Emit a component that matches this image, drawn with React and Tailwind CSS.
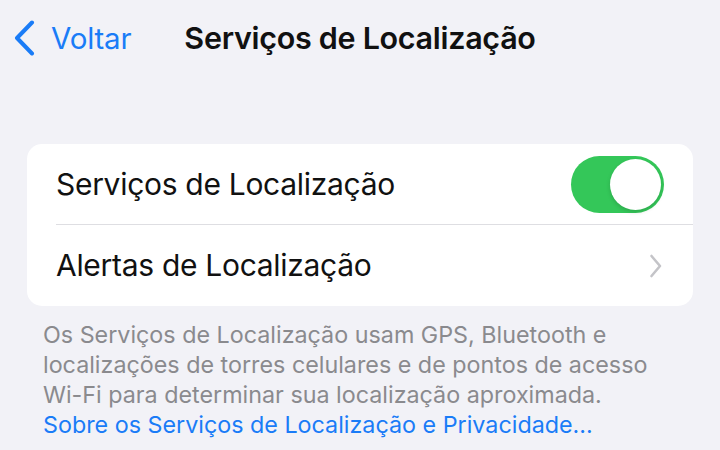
import React from "react";

const font = { fontFamily: "Inter, 'Noto Sans', sans-serif" };

function BackChevron() {
  return (
    <svg width="22" height="36" viewBox="0 0 22 36" fill="none">
      <path d="M19 2.5 L4 18 L19 33.5" stroke="#1a7cf7" strokeWidth="4" strokeLinecap="round" strokeLinejoin="round" />
    </svg>
  );
}

function RowChevron() {
  return (
    <svg width="14" height="24" viewBox="0 0 14 24" fill="none">
      <path d="M2.5 2 L11 12 L2.5 22" stroke="#c4c4c8" strokeWidth="2.6" strokeLinecap="round" strokeLinejoin="round" />
    </svg>
  );
}

function Toggle() {
  return (
    <div className="w-[93px] h-[57px] rounded-full bg-[#34c759] p-[3px] flex justify-end">
      <div className="w-[51px] h-[51px] rounded-full bg-white shadow-[0_2px_4px_rgba(0,0,0,0.15)]" />
    </div>
  );
}

export default function App() {
  return (
    <div className="w-[720px] h-[450px] bg-[#f2f2f7] overflow-hidden" style={font}>
      <header className="h-[76px] grid grid-cols-[1fr_auto_1fr] items-center">
        <div className="flex items-center pl-[13px] gap-[16px] text-[#1a7cf7] text-[29.5px] tracking-[-0.2px]">
          <BackChevron />
          <span>Voltar</span>
        </div>
        <h1 className="text-[30.5px] font-semibold text-[#111] tracking-[-0.3px]">Serviços de Localização</h1>
        <div />
      </header>

      <div className="mt-[68px] mx-[27px] bg-white rounded-[15px] overflow-hidden">
        <div className="h-[80px] flex items-center justify-between pl-[29px] pr-[29px]">
          <span className="text-[30px] text-[#111] tracking-[-0.3px]">Serviços de Localização</span>
          <Toggle />
        </div>
        <div className="ml-[29px] h-px bg-[#dedee2]" />
        <div className="h-[81px] flex items-center justify-between pl-[29px] pr-[30px]">
          <span className="text-[30px] text-[#111] tracking-[-0.3px]">Alertas de Localização</span>
          <RowChevron />
        </div>
      </div>

      <div className="mt-[14px] pl-[43px] pr-[20px] text-[23.3px] leading-[30px] text-[#8a8a8e] whitespace-nowrap">
        <p>Os Serviços de Localização usam GPS, Bluetooth e</p>
        <p>localizações de torres celulares e de pontos de acesso</p>
        <p>Wi-Fi para determinar sua localização aproximada.</p>
        <p className="text-[#1a7cf7]">Sobre os Serviços de Localização e Privacidade...</p>
      </div>
    </div>
  );
}
